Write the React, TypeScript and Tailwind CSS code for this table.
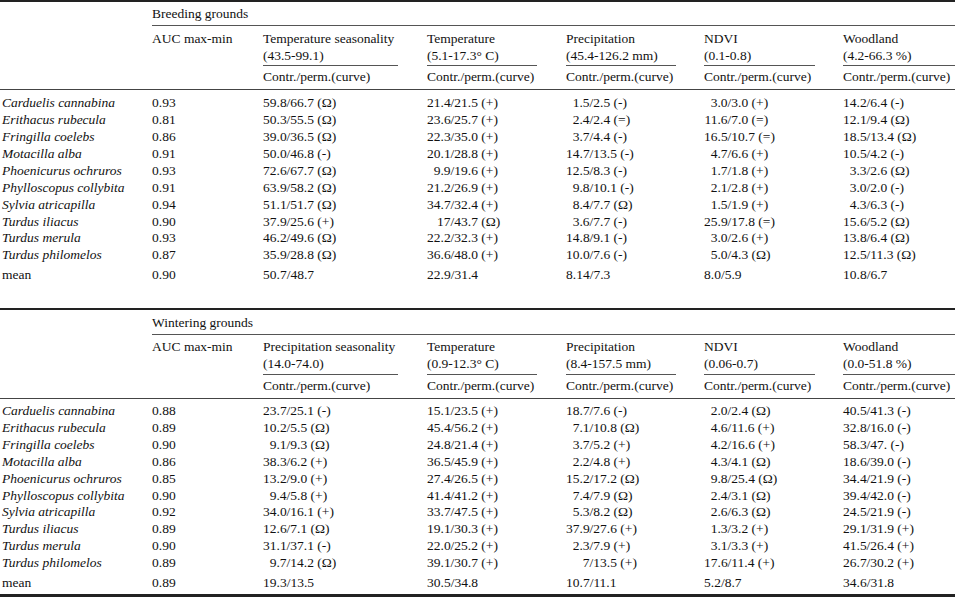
type Row = { sp: string; auc: string; cells: string[] };
type Section = {
  title: string;
  titleH: string;
  heads: [string, string][];
  rows: Row[];
  mean: Row;
  pad: string;
};

const colW = ['w-[164px]', 'w-[139px]', 'w-[138px]', 'w-[139px]', 'w-[112px]'];
const lineMr = ['mr-[29px]', 'mr-[29px]', 'mr-[28px]', 'mr-[28px]', 'mr-0'];

const r = (sp: string, auc: string, ...cells: string[]): Row => ({ sp, auc, cells });

const sections: Section[] = [
  {
    title: 'Breeding grounds',
    titleH: 'h-[24px]',
    heads: [
      ['Temperature seasonality', '(43.5-99.1)'],
      ['Temperature', '(5.1-17.3° C)'],
      ['Precipitation', '(45.4-126.2 mm)'],
      ['NDVI', '(0.1-0.8)'],
      ['Woodland', '(4.2-66.3 %)'],
    ],
    rows: [
      r('Carduelis cannabina', '0.93', '59.8/66.7 (Ω)', '21.4/21.5 (+)', '1.5/2.5 (-)', '3.0/3.0 (+)', '14.2/6.4 (-)'),
      r('Erithacus rubecula', '0.81', '50.3/55.5 (Ω)', '23.6/25.7 (+)', '2.4/2.4 (=)', '11.6/7.0 (=)', '12.1/9.4 (Ω)'),
      r('Fringilla coelebs', '0.86', '39.0/36.5 (Ω)', '22.3/35.0 (+)', '3.7/4.4 (-)', '16.5/10.7 (=)', '18.5/13.4 (Ω)'),
      r('Motacilla alba', '0.91', '50.0/46.8 (-)', '20.1/28.8 (+)', '14.7/13.5 (-)', '4.7/6.6 (+)', '10.5/4.2 (-)'),
      r('Phoenicurus ochruros', '0.93', '72.6/67.7 (Ω)', '9.9/19.6 (+)', '12.5/8.3 (-)', '1.7/1.8 (+)', '3.3/2.6 (Ω)'),
      r('Phylloscopus collybita', '0.91', '63.9/58.2 (Ω)', '21.2/26.9 (+)', '9.8/10.1 (-)', '2.1/2.8 (+)', '3.0/2.0 (-)'),
      r('Sylvia atricapilla', '0.94', '51.1/51.7 (Ω)', '34.7/32.4 (+)', '8.4/7.7 (Ω)', '1.5/1.9 (+)', '4.3/6.3 (-)'),
      r('Turdus iliacus', '0.90', '37.9/25.6 (+)', '17/43.7 (Ω)', '3.6/7.7 (-)', '25.9/17.8 (=)', '15.6/5.2 (Ω)'),
      r('Turdus merula', '0.93', '46.2/49.6 (Ω)', '22.2/32.3 (+)', '14.8/9.1 (-)', '3.0/2.6 (+)', '13.8/6.4 (Ω)'),
      r('Turdus philomelos', '0.87', '35.9/28.8 (Ω)', '36.6/48.0 (+)', '10.0/7.6 (-)', '5.0/4.3 (Ω)', '12.5/11.3 (Ω)'),
    ],
    mean: r('mean', '0.90', '50.7/48.7', '22.9/31.4', '8.14/7.3', '8.0/5.9', '10.8/6.7'),
    pad: 'pt-[5px] pb-[24px]',
  },
  {
    title: 'Wintering grounds',
    titleH: 'h-[25px]',
    heads: [
      ['Precipitation seasonality', '(14.0-74.0)'],
      ['Temperature', '(0.9-12.3° C)'],
      ['Precipitation', '(8.4-157.5 mm)'],
      ['NDVI', '(0.06-0.7)'],
      ['Woodland', '(0.0-51.8 %)'],
    ],
    rows: [
      r('Carduelis cannabina', '0.88', '23.7/25.1 (-)', '15.1/23.5 (+)', '18.7/7.6 (-)', '2.0/2.4 (Ω)', '40.5/41.3 (-)'),
      r('Erithacus rubecula', '0.89', '10.2/5.5 (Ω)', '45.4/56.2 (+)', '7.1/10.8 (Ω)', '4.6/11.6 (+)', '32.8/16.0 (-)'),
      r('Fringilla coelebs', '0.90', '9.1/9.3 (Ω)', '24.8/21.4 (+)', '3.7/5.2 (+)', '4.2/16.6 (+)', '58.3/47. (-)'),
      r('Motacilla alba', '0.86', '38.3/6.2 (+)', '36.5/45.9 (+)', '2.2/4.8 (+)', '4.3/4.1 (Ω)', '18.6/39.0 (-)'),
      r('Phoenicurus ochruros', '0.85', '13.2/9.0 (+)', '27.4/26.5 (+)', '15.2/17.2 (Ω)', '9.8/25.4 (Ω)', '34.4/21.9 (-)'),
      r('Phylloscopus collybita', '0.90', '9.4/5.8 (+)', '41.4/41.2 (+)', '7.4/7.9 (Ω)', '2.4/3.1 (Ω)', '39.4/42.0 (-)'),
      r('Sylvia atricapilla', '0.92', '34.0/16.1 (+)', '33.7/47.5 (+)', '5.3/8.2 (Ω)', '2.6/6.3 (Ω)', '24.5/21.9 (-)'),
      r('Turdus iliacus', '0.89', '12.6/7.1 (Ω)', '19.1/30.3 (+)', '37.9/27.6 (+)', '1.3/3.2 (+)', '29.1/31.9 (+)'),
      r('Turdus merula', '0.90', '31.1/37.1 (-)', '22.0/25.2 (+)', '2.3/7.9 (+)', '3.1/3.3 (+)', '41.5/26.4 (+)'),
      r('Turdus philomelos', '0.89', '9.7/14.2 (Ω)', '39.1/30.7 (+)', '7/13.5 (+)', '17.6/11.4 (+)', '26.7/30.2 (+)'),
    ],
    mean: r('mean', '0.89', '19.3/13.5', '30.5/34.8', '10.7/11.1', '5.2/8.7', '34.6/31.8'),
    pad: 'pt-[4px] pb-[2px]',
  },
];

// values line up on the slash, the mean row does not
const Value = ({ v, mean }: { v: string; mean?: boolean }) => {
  if (mean) return <span>{v}</span>;
  const i = v.indexOf('/');
  return (
    <>
      <span className="inline-block w-[23.6px] text-right">{v.slice(0, i)}</span>
      {v.slice(i)}
    </>
  );
};

const DataRow = ({ row, mean }: { row: Row; mean?: boolean }) => (
  <div className={`flex h-[16.9px] items-center whitespace-nowrap ${mean ? 'mt-[3px]' : ''}`}>
    <div className={`w-[152px] pl-[2px] ${mean ? '' : 'italic'}`}>{row.sp}</div>
    <div className="w-[111px]">{row.auc}</div>
    {row.cells.map((c, i) => (
      <div key={i} className={colW[i]}>
        <Value v={c} mean={mean} />
      </div>
    ))}
  </div>
);

const Block = ({ s, last }: { s: Section; last?: boolean }) => (
  <div className={`border-t-2 border-[#222] ${last ? 'border-b-[3px]' : ''}`}>
    <div className="flex">
      <div className="w-[152px]" />
      <div className={`flex flex-1 items-center border-b border-[#555] pt-[2px] ${s.titleH}`}>{s.title}</div>
    </div>
    <div className="flex border-b border-[#444]">
      <div className="w-[152px]" />
      <div className="w-[111px] pt-[3.5px] leading-[17px]">AUC max-min</div>
      {s.heads.map(([a, b], i) => (
        <div key={a + i} className={colW[i]}>
          <div className={`h-[40px] border-b border-[#555] pt-[3.5px] leading-[17px] ${lineMr[i]}`}>
            <div>{a}</div>
            <div>{b}</div>
          </div>
          <div className="flex h-[23px] items-center whitespace-nowrap">Contr./perm.(curve)</div>
        </div>
      ))}
    </div>
    <div className={s.pad}>
      {s.rows.map((row) => (
        <DataRow key={row.sp} row={row} />
      ))}
      <DataRow row={s.mean} mean />
    </div>
  </div>
);

export default function App() {
  return (
    <div className="w-[955px] h-[597px] overflow-hidden bg-white text-[13.5px] text-[#111] font-['Liberation_Serif',serif]">
      <Block s={sections[0]} />
      <Block s={sections[1]} last />
    </div>
  );
}
